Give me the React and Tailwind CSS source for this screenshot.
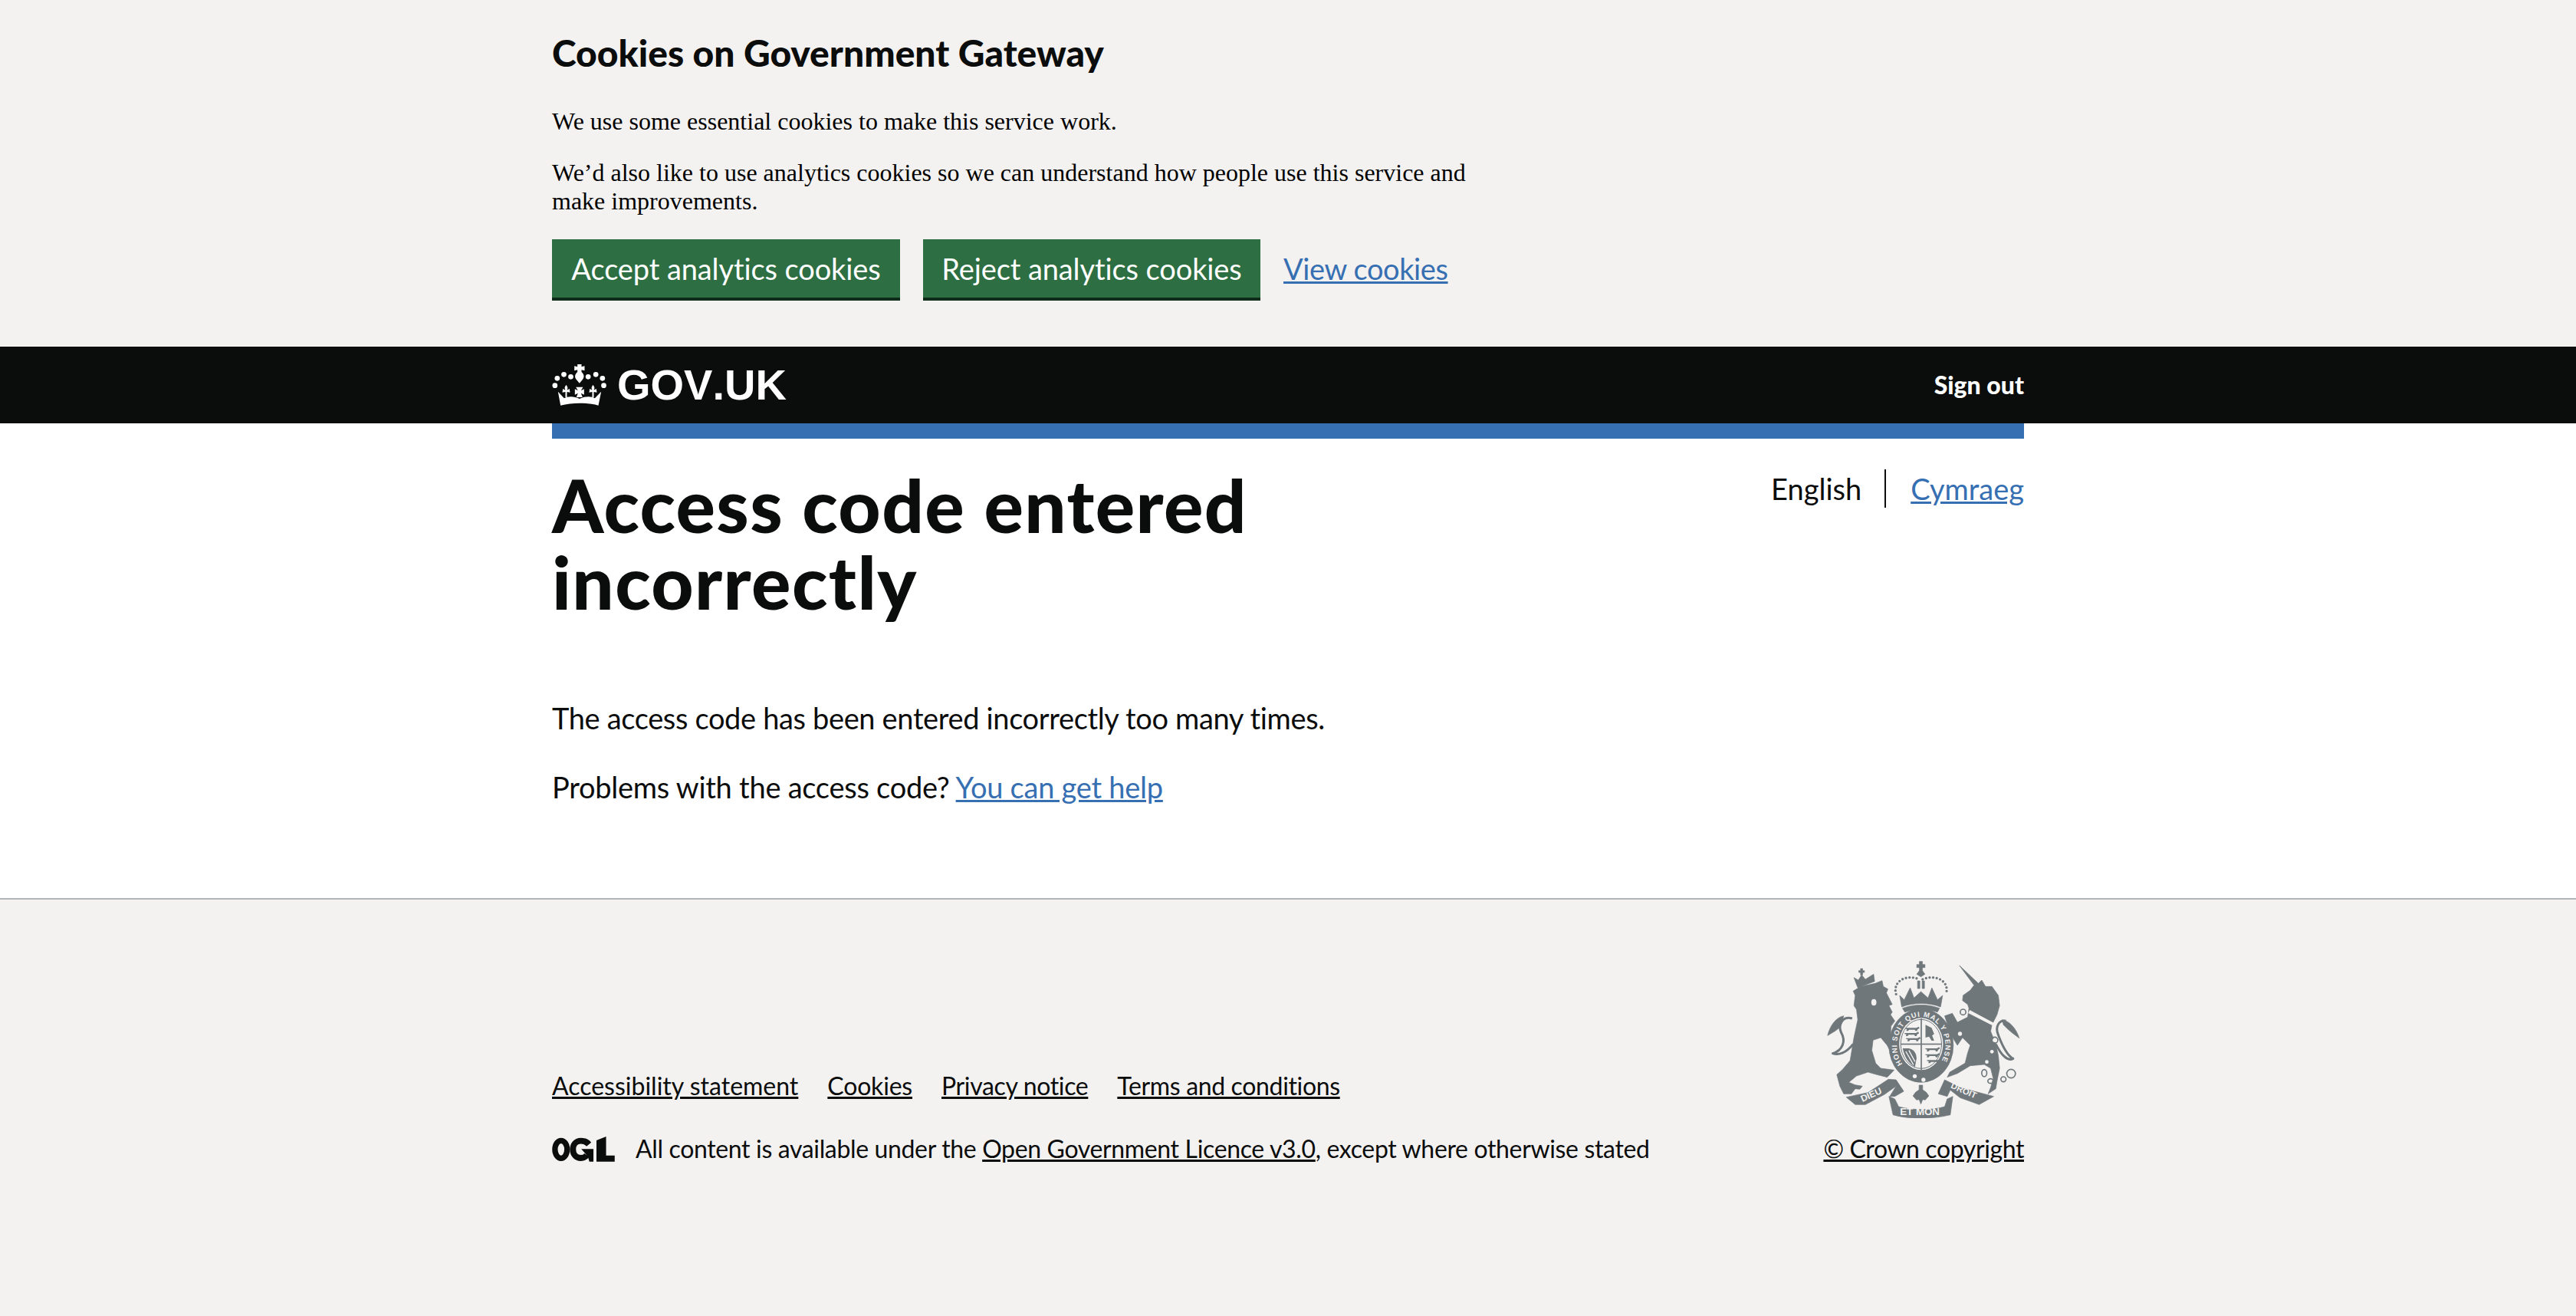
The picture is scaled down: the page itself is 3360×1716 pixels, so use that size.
import React from "react";

const CrownLogo = () => (
  <svg viewBox="15 15 212 165" className="w-[71px] h-[55px] fill-white">
    <path d="M114 15h16v10l12-3v18l-12-3v8c8 8 14 18 4 30l-12 14-12-14c-10-12-4-22 4-30v-8l-12 3V22l12 3z" />
    <circle cx="26" cy="98" r="10" />
    <circle cx="35" cy="70" r="10" />
    <circle cx="61" cy="55" r="10" />
    <circle cx="88" cy="64" r="10" />
    <circle cx="156" cy="64" r="10" />
    <circle cx="186" cy="55" r="10" />
    <circle cx="212" cy="70" r="10" />
    <circle cx="217" cy="98" r="10" />
    <path d="M38 122L62 148C75 140 100 138 122 150C145 138 170 140 182 148L207 122L196 176C150 164 95 164 48 176Z" />
    <path d="M70 96c7 8 7 14 3 20l10-5 2 14-12-2v22h-6v-22l-12 2 2-14 10 5c-4-6-4-12 3-20z" />
    <path d="M175 96c7 8 7 14 3 20l10-5 2 14-12-2v22h-6v-22l-12 2 2-14 10 5c-4-6-4-12 3-20z" />
    <path d="M108 104h28l-8 14 12-6v22l-12-6 6 16h-24l6-16-12 6v-22l12 6z" />
  </svg>
);

const OglLogo = () => (
  <svg viewBox="15 25 250 100" className="w-[83px] h-[33px]">
    <ellipse cx="50" cy="76" rx="24" ry="35" fill="none" stroke="#0b0c0c" strokeWidth="22" />
    <path d="M160 56C150 44 138 42 128 42C108 42 97 58 97 76C97 96 110 110 128 110C140 110 148 104 152 98" fill="none" stroke="#0b0c0c" strokeWidth="24" />
    <path d="M130 74H178V124H162L156 104Z" fill="#0b0c0c" />
    <path d="M190 40L228 25V100H262V124H190Z" fill="#0b0c0c" />
  </svg>
);

// one of the three walking lions on the shield
const ShieldLion = ({ x, y }) => (
  <path d={`M${x} ${y}h44l8-5 4 6-8 5-2 6h-6l-3-5h-22l-4 5h-7l2-7-8-2z`} fill="#6f777b" />
);

const Crest = () => (
  <svg viewBox="130 70 755 615" className="w-[252px] h-[205px]">
    <g fill="#6f777b" stroke="#6f777b" strokeWidth="2" strokeLinejoin="round">
      {/* lion */}
      <path d="M232 188L262 170L318 158L345 147L350 170L368 180L362 195L385 240L372 245L385 270L378 280L395 305L380 325L378 370L405 405L405 425L385 440L365 400L340 370L310 380L305 420L320 470L340 490L392 497L380 510L365 525L325 515L290 505L245 520L215 545L240 555L268 560L258 572L240 570L225 590L195 590L180 560L168 515L190 495L220 460L235 370L250 300L245 260L235 245L240 205Z" />
      <path d="M235 135L252 145L265 125L280 142L312 122L316 150L250 175Z" />
      <path d="M261 100h8v8h7v7h-7v10h-8v-10h-7v-7h7z" />
      {/* crown */}
      <path d="M491 72h12v12h10v12h-10v12l10 14-16 10-16-10 10-14v-12h-10v-12h10z" />
      <path d="M400 200C385 150 440 120 490 142M504 142C555 120 612 150 595 200" fill="none" strokeWidth="10" strokeLinecap="round" strokeDasharray="0 14" />
      <rect x="484" y="148" width="9" height="30" />
      <rect x="502" y="148" width="9" height="30" />
      <path d="M414 205L432 222L455 175L470 215L497 190L525 215L540 175L562 222L582 205L574 250C530 232 465 232 422 250Z" />
      <path d="M425 255C470 238 525 238 570 255L562 270C520 256 475 256 434 270Z" />
      {/* unicorn */}
      <path d="M648 88L722 158L735 145L750 170L775 170L800 205L805 245L795 280L785 300L775 320L770 345L790 395L800 440L805 490L795 540L790 570L760 590L770 565L780 530L770 490L745 475L690 480L640 510L600 525L610 505L670 470L680 430L690 400L660 370L640 400L615 360L590 285L620 275L640 310L680 290L685 255L680 240L660 225L662 205L690 185L705 165Z" />
      {/* tails */}
      <path d="M232 395C205 430 175 440 152 432C190 420 205 385 185 350C172 320 190 285 228 295" fill="none" strokeWidth="9" />
      <path d="M195 285C165 290 140 325 132 362L160 345L180 330L190 305Z" />
      <path d="M790 395C810 435 835 465 858 452C835 440 815 400 800 360C785 325 805 300 830 305" fill="none" strokeWidth="9" />
      <path d="M815 300C845 305 870 335 882 372L855 352L835 335L820 320Z" />
      {/* garter */}
      <ellipse cx="498" cy="401" rx="126" ry="144" />
      {/* ribbons */}
      <path d="M205 603L290 585L370 533L400 535L430 580L395 600L375 600L400 560L355 592L280 632L240 632Z" />
      <path d="M372 600L395 610L410 640C465 655 540 655 590 640L600 610L622 600L612 672C540 690 450 690 388 672Z" />
      <path d="M565 590L590 535L650 565L782 600L725 632L650 605L612 575L600 600Z" />
      <path d="M490 556h14v18l14 10 10 14-14 16-10-2-7 18-7-18-10 2-14-16 10-14 14-10z" />
      {/* chain */}
      <g fill="none" strokeWidth="5">
        <circle cx="662" cy="270" r="11" />
        <circle cx="650" cy="355" r="12" />
        <circle cx="786" cy="380" r="12" />
        <ellipse cx="745" cy="509" rx="10" ry="14" />
        <ellipse cx="770" cy="540" rx="11" ry="9" />
        <circle cx="820" cy="533" r="10" />
        <circle cx="850" cy="511" r="17" />
      </g>
    </g>
    {/* shield */}
    <ellipse cx="498" cy="395" rx="86" ry="102" fill="#f3f2f1" />
    <ellipse cx="498" cy="395" rx="80" ry="96" fill="none" stroke="#6f777b" strokeWidth="3" />
    <rect x="496" y="295" width="5" height="202" fill="#6f777b" />
    <rect x="418" y="393" width="160" height="5" fill="#6f777b" />
    <ShieldLion x="436" y="332" />
    <ShieldLion x="434" y="352" />
    <ShieldLion x="440" y="372" />
    <ShieldLion x="516" y="412" />
    <ShieldLion x="516" y="435" />
    <ShieldLion x="522" y="458" />
    <path d="M515 320l24 12 10 24-8 6 8 20h-10l-10-16-14 4z" fill="#6f777b" />
    <path d="M426 412h24c20 4 30 20 30 40l-6 32c-24-10-42-40-48-72z" fill="#6f777b" />
    <path d="M438 424l30 52M450 420l24 44" stroke="#f3f2f1" strokeWidth="4" fill="none" />
    <g fill="#f3f2f1" fontFamily="'Liberation Sans',sans-serif" fontWeight="700">
      <circle cx="662" cy="270" r="7" />
      <circle cx="650" cy="355" r="8" />
      <circle cx="786" cy="380" r="8" />
      <circle cx="775" cy="425" r="7" />
      <circle cx="755" cy="465" r="7" />
      <ellipse cx="313" cy="232" rx="10" ry="13" />
      <path d="M688 262L782 312L776 322L682 274Z" />
      <circle cx="473" cy="521" r="8" />
      <circle cx="507" cy="535" r="8" />
      <path id="garter-text" d="M425 473A95 113 0 1 1 571 473" fill="none" />
      <text fontSize="28" textLength="465">
        <textPath href="#garter-text" textLength="465">HONI SOIT QUI MAL Y PENSE</textPath>
      </text>
      <text x="415" y="674" fontSize="40">ET MON</text>
      <text x="268" y="622" fontSize="36" transform="rotate(-24 268 622)">DIEU</text>
      <text x="612" y="566" fontSize="34" transform="rotate(24 612 566)">DROIT</text>
    </g>
  </svg>
);

export default function App() {
  return (
    <div className="min-h-[1716px] flex flex-col bg-white text-[#0b0c0c] font-['Lato',sans-serif]">
      <div className="bg-[#f3f2f1] h-[452px] pt-10">
        <div className="w-[1920px] mx-auto">
          <h2 className="text-[48px] leading-[58px] font-black">Cookies on Government Gateway</h2>
          <div className="font-['Liberation_Serif',serif] text-[32px] leading-[36.8px] text-black w-[1200px] mt-[42px]">
            <p>We use some essential cookies to make this service work.</p>
            <p className="mt-[30px]">We’d also like to use analytics cookies so we can understand how people use this service and make improvements.</p>
          </div>
          <div className="flex items-center gap-[30px] mt-[32px] text-[38px]">
            <span className="bg-[#2d6f42] text-white w-[454px] h-[80px] flex items-center justify-center border-b-4 border-[#0f2b1a] tracking-[-0.1px]">Accept analytics cookies</span>
            <span className="bg-[#2d6f42] text-white w-[440px] h-[80px] flex items-center justify-center border-b-4 border-[#0f2b1a] tracking-[-0.1px]">Reject analytics cookies</span>
            <a className="text-[#366fb2] underline tracking-[-0.4px] mb-1">View cookies</a>
          </div>
        </div>
      </div>
      <div className="bg-[#0b0c0c] h-[100px]">
        <div className="w-[1920px] mx-auto h-full flex items-center justify-between">
          <div className="flex items-center gap-[14px]">
            <CrownLogo />
            <span className="font-['Liberation_Sans',sans-serif] font-bold text-[56px] [font-kerning:none] text-white">GOV.UK</span>
          </div>
          <span className="text-white font-black text-[32px]">Sign out</span>
        </div>
      </div>
      <div className="w-[1920px] mx-auto flex-none">
        <div className="h-5 bg-[#366fb2]" />
        <div className="flex justify-between pt-[36px]">
          <h1 className="text-[96px] leading-[100px] font-black tracking-[1.4px] w-[1100px]">Access code entered incorrectly</h1>
          <div className="flex items-center h-[50px] mt-[4px] text-[38px]">
            <span className="pr-[30px]">English</span>
            <span className="w-[2px] h-[50px] bg-[#0b0c0c]" />
            <a className="pl-[32px] text-[#366fb2] underline">Cymraeg</a>
          </div>
        </div>
        <p className="text-[38px] leading-[50px] mt-[103px] tracking-[-0.35px]">The access code has been entered incorrectly too many times.</p>
        <p className="text-[38px] leading-[50px] mt-10 tracking-[-0.25px]">Problems with the access code? <a className="text-[#366fb2] underline">You can get help</a></p>
      </div>
      <div className="flex-1 mt-[120px] bg-[#f3f2f1] border-t-2 border-[#b1b4b6]">
        <div className="w-[1920px] mx-auto pt-20 flex justify-between items-end text-[32px]">
          <div>
            <div className="flex gap-[38px] mb-[34px]">
              <a className="underline">Accessibility statement</a>
              <a className="underline tracking-[-0.2px]">Cookies</a>
              <a className="underline tracking-[-0.35px]">Privacy notice</a>
              <a className="underline tracking-[-0.35px]">Terms and conditions</a>
            </div>
            <div className="flex items-center gap-[26px] tracking-[-0.35px]">
              <OglLogo />
              <span>All content is available under the <a className="underline">Open Government Licence v3.0</a>, except where otherwise stated</span>
            </div>
          </div>
          <div className="flex flex-col items-end gap-4">
            <div className="mr-[5px]"><Crest /></div>
            <a className="underline tracking-[-0.4px]">© Crown copyright</a>
          </div>
        </div>
      </div>
    </div>
  );
}
